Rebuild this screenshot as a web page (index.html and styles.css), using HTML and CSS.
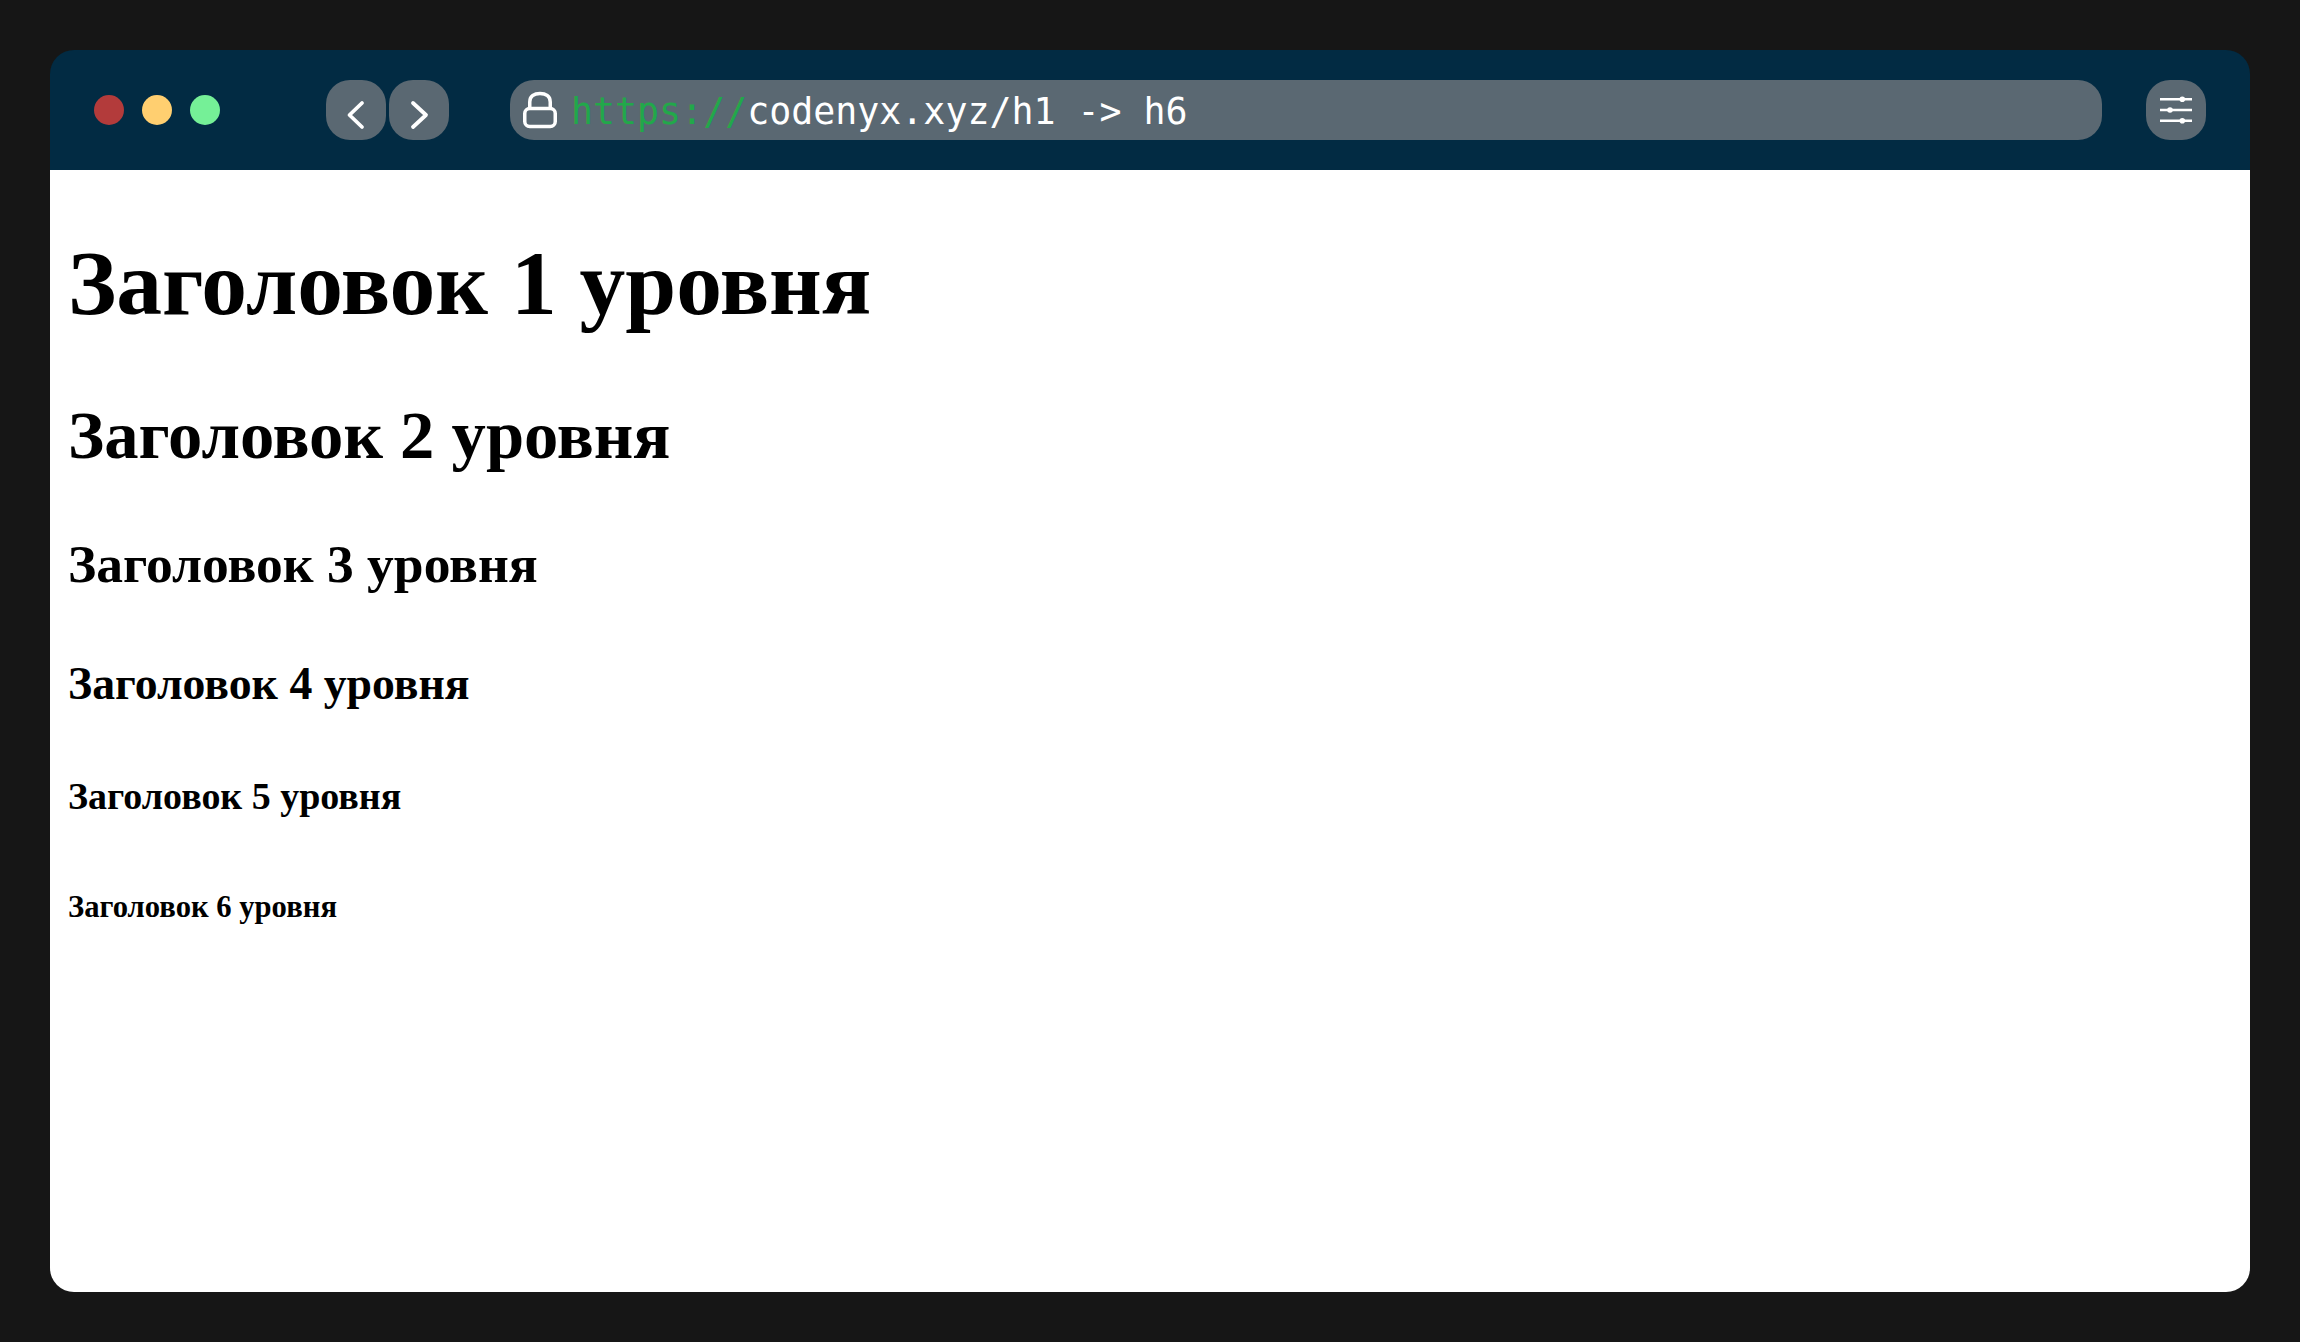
FILE: index.html
```html
<!DOCTYPE html>
<html lang="ru">
<head>
<meta charset="utf-8">
<title>Заголовки</title>
<link rel="stylesheet" href="styles.css">
</head>
<body>
<div class="window">
  <header class="bar">
    <div class="dots">
      <span class="dot red"></span>
      <span class="dot yellow"></span>
      <span class="dot green"></span>
    </div>
    <div class="nav">
      <span class="btn">
        <svg class="ico" viewBox="0 0 60 60"><path d="M36 23 L23.500 35 L36 47" /></svg>
      </span>
      <span class="btn">
        <svg class="ico" viewBox="0 0 60 60"><path d="M24 23 L37 35 L24 47" /></svg>
      </span>
    </div>
    <div class="address">
      <svg class="lock" viewBox="0 0 36 38"><rect x="1.750" y="17.500" width="30.500" height="18" rx="5"/><path d="M6.750 17 V11 C6.750 5 11.500 2.500 17 2.500 C22.500 2.500 27.250 5 27.250 11 V17"/></svg>
      <span class="url"><span class="scheme">https://</span>codenyx.xyz/h1 -&gt; h6</span>
    </div>
    <span class="btn settings">
      <svg class="ico" viewBox="0 0 60 60">
        <path d="M14 19.300 H46 M14 30 H46 M14 40.700 H46"/>
        <circle cx="36.300" cy="19.300" r="2.800"/><circle cx="24" cy="30" r="2.800"/><circle cx="36.300" cy="40.700" r="2.800"/>
      </svg>
    </span>
  </header>
  <main class="content">
    <h1>Заголовок 1 уровня</h1>
    <h2>Заголовок 2 уровня</h2>
    <h3>Заголовок 3 уровня</h3>
    <h4>Заголовок 4 уровня</h4>
    <h5>Заголовок 5 уровня</h5>
    <h6>Заголовок 6 уровня</h6>
  </main>
</div>
</body>
</html>
```
FILE: styles.css
```css
html, body { margin: 0; height: 100%; }
body { background: #161616; padding: 50px; box-sizing: border-box; }
.window { height: 1242px; display: flex; flex-direction: column; }
.bar { height: 120px; flex: none; background: #022b43; border-radius: 24px 24px 0 0; display: flex; align-items: center; padding: 0 44px; box-sizing: border-box; }
.dots { display: flex; gap: 18px; width: 232px; flex: none; }
.dot { width: 30px; height: 30px; border-radius: 50%; }
.red { background: #b33b3b; }
.yellow { background: #ffcf70; }
.green { background: #75f097; }
.nav { display: flex; gap: 3px; width: 184px; flex: none; }
.btn { width: 60px; height: 60px; border-radius: 24px; background: #5a6872; display: block; flex: none; }
.ico { display: block; width: 60px; height: 60px; fill: #fff; stroke: #fff; stroke-width: 2.500; stroke-linecap: round; stroke-linejoin: round; }
.nav .ico { fill: none; stroke-width: 3.800; }
.settings .ico path { stroke-linecap: butt; }
.settings .ico circle { stroke: none; }
.address { flex: 1; height: 60px; border-radius: 24px; background: #5a6872; display: flex; align-items: center; padding-left: 13px; margin-right: 44px; gap: 12px; }
.lock { width: 36px; height: 38px; fill: none; stroke: #fff; stroke-width: 3.500; flex: none; }
.url { font: 36.600px/60px "DejaVu Sans Mono", monospace; color: #fff; white-space: pre; padding-top: 3px; }
.scheme { color: #22a84a; }
.content { flex: 1; background: #fff; border-radius: 0 0 24px 24px; padding: 1px 18px; font-family: "Liberation Serif", serif; color: #000; font-size: 45.760px; }
h1, h2, h3, h4, h5, h6 { font-weight: 700; }
h1 { font-size: 2em; margin: 59px 0 60px; }
h2 { font-size: 1.5em; margin: 60px 0 58px; }
h3 { font-size: 1.17em; margin: 54px 0; }
h4 { font-size: 1em; margin: 62px 0; }
h5 { font-size: .83em; margin: 64.400px 0 71.500px; }
h6 { font-size: .67em; margin: 71.500px 0; }
```
